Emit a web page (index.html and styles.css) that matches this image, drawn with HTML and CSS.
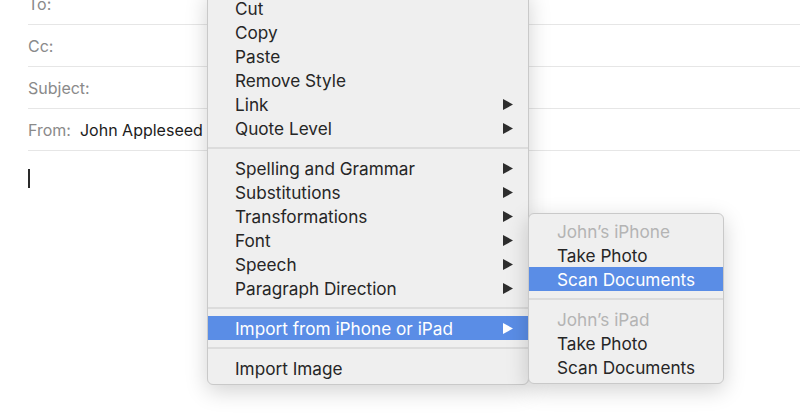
FILE: index.html
```html
<!DOCTYPE html>
<html>
<head>
<meta charset="utf-8">
<link rel="stylesheet" href="styles.css">
</head>
<body>
<div class="mail">
  <div class="fields">
    <div class="field"><span class="label">To:</span></div>
    <div class="field"><span class="label">Cc:</span></div>
    <div class="field"><span class="label">Subject:</span></div>
    <div class="field"><span class="label">From:</span><span class="value">John Appleseed</span></div>
  </div>
  <div class="body"><span class="cursor"></span></div>
</div>

<div class="menu main-menu">
  <div class="item">Cut</div>
  <div class="item">Copy</div>
  <div class="item">Paste</div>
  <div class="item">Remove Style</div>
  <div class="item sub">Link<svg class="arrow" viewBox="0 0 10 11"><polygon points="0,0 10,5.5 0,11"/></svg></div>
  <div class="item sub">Quote Level<svg class="arrow" viewBox="0 0 10 11"><polygon points="0,0 10,5.5 0,11"/></svg></div>
  <div class="sep"></div>
  <div class="item sub">Spelling and Grammar<svg class="arrow" viewBox="0 0 10 11"><polygon points="0,0 10,5.5 0,11"/></svg></div>
  <div class="item sub">Substitutions<svg class="arrow" viewBox="0 0 10 11"><polygon points="0,0 10,5.5 0,11"/></svg></div>
  <div class="item sub">Transformations<svg class="arrow" viewBox="0 0 10 11"><polygon points="0,0 10,5.5 0,11"/></svg></div>
  <div class="item sub">Font<svg class="arrow" viewBox="0 0 10 11"><polygon points="0,0 10,5.5 0,11"/></svg></div>
  <div class="item sub">Speech<svg class="arrow" viewBox="0 0 10 11"><polygon points="0,0 10,5.5 0,11"/></svg></div>
  <div class="item sub">Paragraph Direction<svg class="arrow" viewBox="0 0 10 11"><polygon points="0,0 10,5.5 0,11"/></svg></div>
  <div class="sep"></div>
  <div class="item sub active">Import from iPhone or iPad<svg class="arrow" viewBox="0 0 10 11"><polygon points="0,0 10,5.5 0,11"/></svg></div>
  <div class="sep"></div>
  <div class="item">Import Image</div>
</div>

<div class="menu sub-menu">
  <div class="item disabled">John’s iPhone</div>
  <div class="item">Take Photo</div>
  <div class="item active">Scan Documents</div>
  <div class="sep"></div>
  <div class="item disabled">John’s iPad</div>
  <div class="item">Take Photo</div>
  <div class="item">Scan Documents</div>
</div>
</body>
</html>
```

FILE: styles.css
```css
html, body {
  margin: 0;
  padding: 0;
  background: #ffffff;
  overflow: hidden;
}
body {
  width: 800px;
  height: 419px;
  position: relative;
  font-family: Inter, "Liberation Sans", sans-serif;
  font-size: 16px;
  color: #222;
}
.mail {
  padding-left: 28px;
}
.fields {
  margin-top: -17px;
}
.field {
  height: 41px;
  border-bottom: 1px solid #e6e6e6;
  display: flex;
  align-items: center;
  gap: 9px;
}
.label {
  color: #8a8a8a;
}
.value {
  color: #1c1c1c;
}
.body {
  padding-top: 18px;
}
.cursor {
  display: block;
  width: 2px;
  height: 19px;
  background: #2a2a2a;
}
.menu {
  position: absolute;
  background: #efefef;
  border: 1px solid #c9c9c9;
  border-radius: 6px;
  box-shadow: 0 6px 22px rgba(0, 0, 0, 0.18);
  padding: 5px 0 4px;
  font-size: 17.2px;
  color: #262626;
}
.main-menu {
  left: 207px;
  top: -10px;
  width: 320px;
}
.sub-menu {
  left: 528px;
  top: 213px;
  width: 194px;
}
.item {
  height: 24px;
  display: flex;
  align-items: center;
  justify-content: space-between;
  padding: 0 15px 0 27px;
  white-space: nowrap;
}
.sub-menu .item {
  padding-left: 28px;
}
.item.active {
  background: #5a8de6;
  color: #ffffff;
}
.item.disabled {
  color: #b4b4b4;
}
.arrow {
  width: 10px;
  height: 11px;
  fill: #2e2e2e;
}
.item.active .arrow {
  fill: #ffffff;
}
.sep {
  height: 16px;
  display: flex;
  align-items: center;
}
.sep::before {
  content: "";
  flex: 1;
  height: 2px;
  background: #dcdcdc;
}
```
